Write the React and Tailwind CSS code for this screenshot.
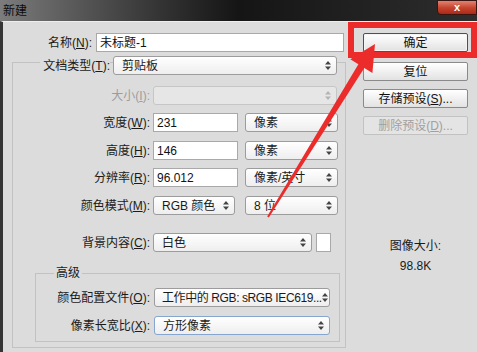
import React from "react";

const FONT = "font-['Liberation_Sans','Noto_Sans_CJK_SC',sans-serif]";

function Spin({ disabled }) {
  return (
    <svg width="6" height="9" viewBox="0 0 6 9" className="shrink-0">
      <path d="M3 0L6 3.5H0Z M3 9L0 5.5H6Z" fill={disabled ? "#b4b4b4" : "#444"} />
    </svg>
  );
}

function Select({ w, children, disabled, focus, tight }) {
  return (
    <div
      className={`${w} h-[19px] flex items-center justify-between ${tight ? "pl-[7px] tracking-[-0.4px]" : "pl-[8px]"} pr-[5px] rounded-[3px] border ${
        disabled
          ? "border-[#c6c6c6] bg-[#e6e6e6]"
          : focus
          ? "border-[#86a6cf] bg-gradient-to-b from-white to-[#eeeeee]"
          : "border-[#9c9c9c] bg-gradient-to-b from-white to-[#eeeeee]"
      } text-[12px] text-[#1a1a1a] whitespace-nowrap overflow-hidden`}
    >
      <span>{children}</span>
      <Spin disabled={disabled} />
    </div>
  );
}

function Input({ w, value }) {
  return (
    <div className={`${w} h-[19px] flex items-center pl-[3px] bg-white border border-[#a9a9a9] text-[12px] text-[#111]`}>
      {value}
    </div>
  );
}

function Label({ w, children, disabled }) {
  return (
    <div className={`${w} text-right text-[12px] whitespace-nowrap ${disabled ? "text-[#9c9c9c]" : "text-[#1a1a1a]"}`}>
      {children}
    </div>
  );
}

function Btn({ children, primary, disabled, mt }) {
  return (
    <div
      className={`${mt} ml-[17px] w-[105px] h-[19px] flex items-center justify-center rounded-[2px] text-[12px] ${
        disabled
          ? "border border-[#c2c2c2] bg-[#e4e4e4] text-[#a0a0a0]"
          : primary
          ? "border border-[#505050] bg-gradient-to-b from-white to-[#e2e2e2] text-[#111] shadow-[inset_0_0_0_1px_#f4f4f4]"
          : "border border-[#8a8a8a] bg-gradient-to-b from-white to-[#e2e2e2] text-[#111]"
      }`}
    >
      {children}
    </div>
  );
}

export default function App() {
  return (
    <div className={`relative w-[477px] h-[352px] overflow-hidden bg-[#dcdcdc] ${FONT}`}>
      {/* title bar */}
      <div className="h-[21px] flex items-center justify-between bg-gradient-to-r from-[#7c7c7c] via-[#151515] to-[#2e2e2e]">
        <span className="ml-[3px] text-[12px] text-[#0c0c0c]">新建</span>
        <div className="self-start w-[40px] h-[15px] rounded-bl-[4px] border border-[#3a1410] bg-gradient-to-b from-[#e08272] via-[#c8452f] to-[#a72a18] flex items-center justify-center text-white text-[11px] font-bold leading-none">
          x
        </div>
      </div>

      {/* body */}
      <div className="flex h-[331px] border-l-[3px] border-[#353535] border-t border-t-[#eeeeee]">
        {/* left column */}
        <div className="w-[343px]">
          <div className="mt-[11px] flex items-center">
            <Label w="w-[89px]">
              名称(<u>N</u>):
            </Label>
            <div className="ml-[4px]">
              <Input w="w-[248px]" value="未标题-1" />
            </div>
          </div>

          <div className="ml-[9px] mt-[10px] w-[334px] border border-[#c2c2c2] pb-[5px]">
            <div className="-mt-[7px] flex items-center">
              <div className="w-[97px] flex justify-end">
                <span className="bg-[#dcdcdc] pl-[3px] text-[12px] text-[#1a1a1a] whitespace-nowrap">
                  文档类型(<u>T</u>):
                </span>
              </div>
              <div className="ml-[3px]">
                <Select w="w-[224px]">剪贴板</Select>
              </div>
            </div>

            <div className="mt-[11px] flex items-center">
              <Label w="w-[137px]" disabled>
                大小(<u>I</u>):
              </Label>
              <div className="ml-[3px]">
                <Select w="w-[184px]" disabled />
              </div>
            </div>

            <div className="mt-[8px] flex items-center">
              <Label w="w-[137px]">
                宽度(<u>W</u>):
              </Label>
              <div className="ml-[3px]">
                <Input w="w-[85px]" value="231" />
              </div>
              <div className="ml-[7px]">
                <Select w="w-[93px]">像素</Select>
              </div>
            </div>

            <div className="mt-[9px] flex items-center">
              <Label w="w-[137px]">
                高度(<u>H</u>):
              </Label>
              <div className="ml-[3px]">
                <Input w="w-[85px]" value="146" />
              </div>
              <div className="ml-[7px]">
                <Select w="w-[93px]">像素</Select>
              </div>
            </div>

            <div className="mt-[8px] flex items-center">
              <Label w="w-[137px]">
                分辨率(<u>R</u>):
              </Label>
              <div className="ml-[3px]">
                <Input w="w-[85px]" value="96.012" />
              </div>
              <div className="ml-[7px]">
                <Select w="w-[93px]">像素/英寸</Select>
              </div>
            </div>

            <div className="mt-[9px] flex items-center">
              <Label w="w-[137px]">
                颜色模式(<u>M</u>):
              </Label>
              <div className="ml-[3px]">
                <Select w="w-[82px]">RGB 颜色</Select>
              </div>
              <div className="ml-[10px]">
                <Select w="w-[93px]">8 位</Select>
              </div>
            </div>

            <div className="mt-[18px] flex items-center">
              <Label w="w-[137px]">
                背景内容(<u>C</u>):
              </Label>
              <div className="ml-[3px]">
                <Select w="w-[159px]">白色</Select>
              </div>
              <div className="ml-[4px] w-[15px] h-[19px] bg-white border border-[#a9a9a9]" />
            </div>

            {/* advanced */}
            <div className="ml-[22px] mt-[21px] w-[305px] border border-[#c2c2c2] pb-[6px]">
              <div className="-mt-[8px] ml-[18px] w-fit h-[14px] leading-[14px] px-[2px] bg-[#dcdcdc] text-[12px] text-[#1a1a1a]">
                高级
              </div>
              <div className="mt-[8px] flex items-center">
                <Label w="w-[114px]">
                  颜色配置文件(<u>O</u>):
                </Label>
                <div className="ml-[4px]">
                  <Select w="w-[176px]" tight>
                    工作中的 RGB: sRGB IEC619...
                  </Select>
                </div>
              </div>
              <div className="mt-[9px] flex items-center">
                <Label w="w-[114px]">
                  像素长宽比(<u>X</u>):
                </Label>
                <div className="ml-[4px]">
                  <Select w="w-[176px]" focus>
                    方形像素
                  </Select>
                </div>
              </div>
            </div>
          </div>
        </div>

        {/* right column */}
        <div className="flex-1 flex flex-col">
          <Btn mt="mt-[11px]" primary>
            确定
          </Btn>
          <Btn mt="mt-[10px]">复位</Btn>
          <Btn mt="mt-[8px]">
            存储预设(<u>S</u>)...
          </Btn>
          <Btn mt="mt-[8px]" disabled>
            删除预设(<u>D</u>)...
          </Btn>
          <div className="mt-[104px] ml-[17px] w-[105px] text-center text-[12px] leading-[14px] text-[#1a1a1a]">图像大小:</div>
          <div className="mt-[6px] ml-[17px] w-[105px] text-center text-[12px] leading-[14px] text-[#1a1a1a]">98.8K</div>
        </div>
      </div>

      {/* annotation overlay */}
      <svg className="absolute inset-0 pointer-events-none" width="477" height="352" viewBox="0 0 477 352">
        <rect x="351" y="25" width="123" height="30" fill="none" stroke="#ec2b2b" strokeWidth="6" />
        <polygon
          points="267.15,216.5 268.85,217.5 364.3,67.9 372.4,72.9 375,44 350.3,59.3 358.4,64.3"
          fill="#ec2b2b"
        />
      </svg>
    </div>
  );
}
